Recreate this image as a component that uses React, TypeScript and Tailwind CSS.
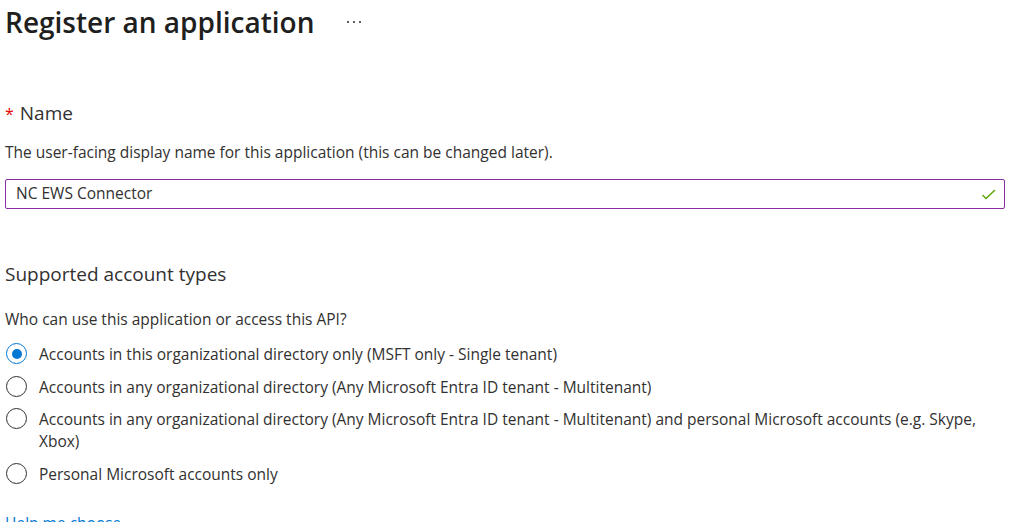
import React from 'react';

const options = [
  { id: 'single', label: 'Accounts in this organizational directory only (MSFT only - Single tenant)', checked: true },
  { id: 'multi', label: 'Accounts in any organizational directory (Any Microsoft Entra ID tenant - Multitenant)' },
  {
    id: 'multi-personal',
    label:
      'Accounts in any organizational directory (Any Microsoft Entra ID tenant - Multitenant) and personal Microsoft accounts (e.g. Skype, Xbox)',
  },
  { id: 'personal', label: 'Personal Microsoft accounts only' },
];

const Radio = ({ checked }: { checked?: boolean }) => (
  <span
    className={`flex h-[21px] w-[21px] shrink-0 items-center justify-center rounded-full border ${
      checked ? 'border-[#0078d4]' : 'border-[#323130]'
    }`}
  >
    {checked && <span className="h-[10px] w-[10px] rounded-full bg-[#0078d4]" />}
  </span>
);

export default function App() {
  return (
    <div className="h-[522px] w-[1030px] overflow-hidden bg-white font-['Segoe_UI','Open_Sans',sans-serif] text-[#323130]">
      {/* Header */}
      <div className="flex items-center pl-[5px] pt-[3px]">
        <h1 className="text-[28px] font-semibold leading-[38px] text-[#201f1e]">Register an application</h1>
        <span className="ml-[33px] flex gap-[4px]">
          <span className="h-[2px] w-[2px] bg-[#605e5c]" />
          <span className="h-[2px] w-[2px] bg-[#605e5c]" />
          <span className="h-[2px] w-[2px] bg-[#605e5c]" />
        </span>
      </div>

      {/* Name */}
      <div className="mt-[58px] pl-[5px]">
        <div className="flex items-baseline text-[19px] leading-[28px]">
          <span className="mr-[6px] text-[16px] text-[#e50000]">*</span>
          <span>Name</span>
        </div>
        <p className="mt-[13px] text-[15.5px] leading-[22px]">
          The user-facing display name for this application (this can be changed later).
        </p>
        <div className="mt-[16px] flex h-[30px] w-[1000px] items-center rounded-[2px] border border-[#8a2da5] pl-[10px] pr-[7px]">
          <span className="flex-1 text-[15.5px]">NC EWS Connector</span>
          <svg width="16" height="16" viewBox="0 0 16 16" fill="none">
            <path d="M1.5 9l3.5 3.5L14 4" stroke="#57a300" strokeWidth="1.3" />
          </svg>
        </div>
      </div>

      {/* Supported account types */}
      <div className="mt-[51px] pl-[5px]">
        <h2 className="text-[19px] leading-[28px]">Supported account types</h2>
        <p className="mt-[20px] text-[15.5px] leading-[22px]">Who can use this application or access this API?</p>
        <div className="mt-[13px] flex w-[985px] flex-col gap-[10.5px] pl-[1px]">
          {options.map((o) => (
            <label key={o.id} className="flex items-start gap-[12px]">
              <Radio checked={o.checked} />
              <span className="text-[15.5px] leading-[22px]">{o.label}</span>
            </label>
          ))}
        </div>
        <a className="mt-[27px] block text-[15.5px] leading-[22px] text-[#0078d4]">Help me choose...</a>
      </div>
    </div>
  );
}
